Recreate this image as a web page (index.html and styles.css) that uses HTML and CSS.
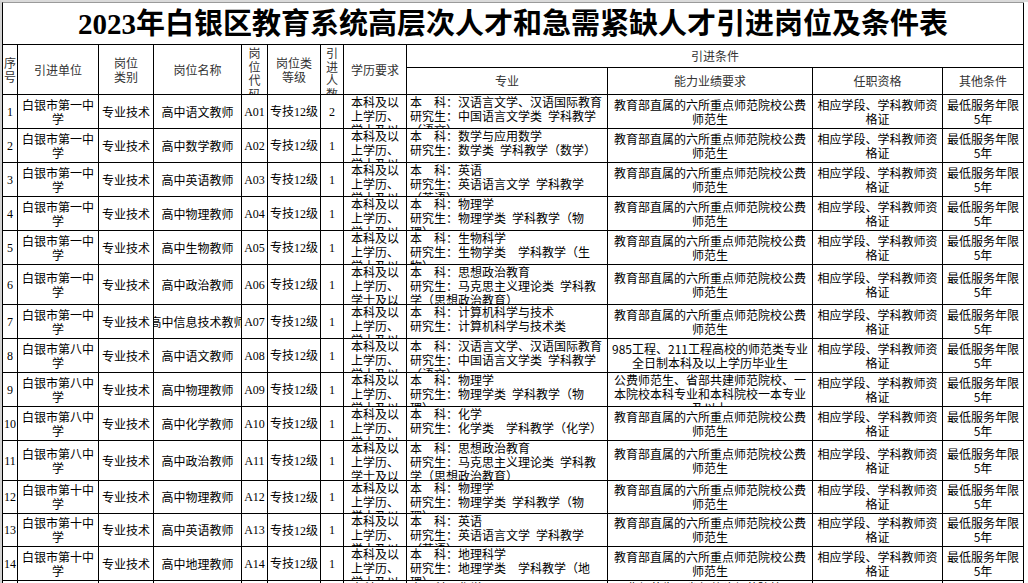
FILE: index.html
```html
<!DOCTYPE html>
<html lang="zh-CN">
<head>
<meta charset="utf-8">
<title>2023年白银区教育系统高层次人才和急需紧缺人才引进岗位及条件表</title>
<link rel="stylesheet" href="styles.css">
</head>
<body>
<div class="sheet">
  <div class="c title">2023年白银区教育系统高层次人才和急需紧缺人才引进岗位及条件表</div>

  <div class="c hd"><span>序<br>号</span></div>
  <div class="c hd"><span>引进单位</span></div>
  <div class="c hd"><span>岗位<br>类别</span></div>
  <div class="c hd"><span>岗位名称</span></div>
  <div class="c hd t vt"><span>岗<br>位<br>代<br>码</span></div>
  <div class="c hd"><span>岗位类<br>等级</span></div>
  <div class="c hd t vt"><span>引<br>进<br>人<br>数</span></div>
  <div class="c hd"><span>学历要求</span></div>
  <div class="c hs span4"><span>引进条件</span></div>
  <div class="c hs"><span>专业</span></div>
  <div class="c hs"><span>能力业绩要求</span></div>
  <div class="c hs"><span>任职资格</span></div>
  <div class="c hs"><span>其他条件</span></div>

  <!-- row 1 -->
  <div class="c sf"><span>1</span></div>
  <div class="c"><span>白银市第一中<br>学</span></div>
  <div class="c"><span>专业技术</span></div>
  <div class="c"><span>高中语文教师</span></div>
  <div class="c sf"><span>A01</span></div>
  <div class="c"><span>专技<b class="sf">12</b>级</span></div>
  <div class="c sf"><span>2</span></div>
  <div class="c t"><span>本科及以<br>上学历、<br>学士及以</span></div>
  <div class="c t l"><span>本　科：汉语言文学、汉语国际教育<br>研究生：中国语言文学类&ensp;学科教学<br>（语文）</span></div>
  <div class="c"><span>教育部直属的六所重点师范院校公费<br>师范生</span></div>
  <div class="c"><span>相应学段、学科教师资<br>格证</span></div>
  <div class="c"><span>最低服务年限<br>5年</span></div>

  <!-- row 2 -->
  <div class="c sf"><span>2</span></div>
  <div class="c"><span>白银市第一中<br>学</span></div>
  <div class="c"><span>专业技术</span></div>
  <div class="c"><span>高中数学教师</span></div>
  <div class="c sf"><span>A02</span></div>
  <div class="c"><span>专技<b class="sf">12</b>级</span></div>
  <div class="c sf"><span>1</span></div>
  <div class="c t"><span>本科及以<br>上学历、<br>学士及以</span></div>
  <div class="c t l"><span>本　科：数学与应用数学<br>研究生：数学类&ensp;学科教学（数学）</span></div>
  <div class="c"><span>教育部直属的六所重点师范院校公费<br>师范生</span></div>
  <div class="c"><span>相应学段、学科教师资<br>格证</span></div>
  <div class="c"><span>最低服务年限<br>5年</span></div>

  <!-- row 3 -->
  <div class="c sf"><span>3</span></div>
  <div class="c"><span>白银市第一中<br>学</span></div>
  <div class="c"><span>专业技术</span></div>
  <div class="c"><span>高中英语教师</span></div>
  <div class="c sf"><span>A03</span></div>
  <div class="c"><span>专技<b class="sf">12</b>级</span></div>
  <div class="c sf"><span>1</span></div>
  <div class="c t"><span>本科及以<br>上学历、<br>学士及以</span></div>
  <div class="c t l"><span>本　科：英语<br>研究生：英语语言文学&ensp;学科教学<br>（英语）</span></div>
  <div class="c"><span>教育部直属的六所重点师范院校公费<br>师范生</span></div>
  <div class="c"><span>相应学段、学科教师资<br>格证</span></div>
  <div class="c"><span>最低服务年限<br>5年</span></div>

  <!-- row 4 -->
  <div class="c sf"><span>4</span></div>
  <div class="c"><span>白银市第一中<br>学</span></div>
  <div class="c"><span>专业技术</span></div>
  <div class="c"><span>高中物理教师</span></div>
  <div class="c sf"><span>A04</span></div>
  <div class="c"><span>专技<b class="sf">12</b>级</span></div>
  <div class="c sf"><span>1</span></div>
  <div class="c t"><span>本科及以<br>上学历、<br>学士及以</span></div>
  <div class="c t l"><span>本　科：物理学<br>研究生：物理学类&ensp;学科教学（物<br>理）</span></div>
  <div class="c"><span>教育部直属的六所重点师范院校公费<br>师范生</span></div>
  <div class="c"><span>相应学段、学科教师资<br>格证</span></div>
  <div class="c"><span>最低服务年限<br>5年</span></div>

  <!-- row 5 -->
  <div class="c sf"><span>5</span></div>
  <div class="c"><span>白银市第一中<br>学</span></div>
  <div class="c"><span>专业技术</span></div>
  <div class="c"><span>高中生物教师</span></div>
  <div class="c sf"><span>A05</span></div>
  <div class="c"><span>专技<b class="sf">12</b>级</span></div>
  <div class="c sf"><span>1</span></div>
  <div class="c t"><span>本科及以<br>上学历、<br>学士及以</span></div>
  <div class="c t l"><span>本　科：生物科学<br>研究生：生物学类&ensp;&ensp;学科教学（生<br>物）</span></div>
  <div class="c"><span>教育部直属的六所重点师范院校公费<br>师范生</span></div>
  <div class="c"><span>相应学段、学科教师资<br>格证</span></div>
  <div class="c"><span>最低服务年限<br>5年</span></div>

  <!-- row 6 -->
  <div class="c sf"><span>6</span></div>
  <div class="c"><span>白银市第一中<br>学</span></div>
  <div class="c"><span>专业技术</span></div>
  <div class="c"><span>高中政治教师</span></div>
  <div class="c sf"><span>A06</span></div>
  <div class="c"><span>专技<b class="sf">12</b>级</span></div>
  <div class="c sf"><span>1</span></div>
  <div class="c t"><span>本科及以<br>上学历、<br>学士及以</span></div>
  <div class="c t l"><span>本　科：思想政治教育<br>研究生：马克思主义理论类&ensp;学科教<br>学（思想政治教育）</span></div>
  <div class="c"><span>教育部直属的六所重点师范院校公费<br>师范生</span></div>
  <div class="c"><span>相应学段、学科教师资<br>格证</span></div>
  <div class="c"><span>最低服务年限<br>5年</span></div>

  <!-- row 7 -->
  <div class="c sf"><span>7</span></div>
  <div class="c"><span>白银市第一中<br>学</span></div>
  <div class="c"><span>专业技术</span></div>
  <div class="c"><span>高中信息技术教师</span></div>
  <div class="c sf"><span>A07</span></div>
  <div class="c"><span>专技<b class="sf">12</b>级</span></div>
  <div class="c sf"><span>1</span></div>
  <div class="c t"><span>本科及以<br>上学历、<br>学士及以</span></div>
  <div class="c t l"><span>本　科：计算机科学与技术<br>研究生：计算机科学与技术类</span></div>
  <div class="c"><span>教育部直属的六所重点师范院校公费<br>师范生</span></div>
  <div class="c"><span>相应学段、学科教师资<br>格证</span></div>
  <div class="c"><span>最低服务年限<br>5年</span></div>

  <!-- row 8 -->
  <div class="c sf"><span>8</span></div>
  <div class="c"><span>白银市第八中<br>学</span></div>
  <div class="c"><span>专业技术</span></div>
  <div class="c"><span>高中语文教师</span></div>
  <div class="c sf"><span>A08</span></div>
  <div class="c"><span>专技<b class="sf">12</b>级</span></div>
  <div class="c sf"><span>1</span></div>
  <div class="c t"><span>本科及以<br>上学历、<br>学士及以</span></div>
  <div class="c t l"><span>本　科：汉语言文学、汉语国际教育<br>研究生：中国语言文学类&ensp;学科教学<br>（语文）</span></div>
  <div class="c"><span>985工程、211工程高校的师范类专业<br>全日制本科及以上学历毕业生</span></div>
  <div class="c"><span>相应学段、学科教师资<br>格证</span></div>
  <div class="c"><span>最低服务年限<br>5年</span></div>

  <!-- row 9 -->
  <div class="c sf"><span>9</span></div>
  <div class="c"><span>白银市第八中<br>学</span></div>
  <div class="c"><span>专业技术</span></div>
  <div class="c"><span>高中物理教师</span></div>
  <div class="c sf"><span>A09</span></div>
  <div class="c"><span>专技<b class="sf">12</b>级</span></div>
  <div class="c sf"><span>1</span></div>
  <div class="c t"><span>本科及以<br>上学历、<br>学士及以</span></div>
  <div class="c t l"><span>本　科：物理学<br>研究生：物理学类&ensp;学科教学（物<br>理）</span></div>
  <div class="c t"><span>公费师范生、省部共建师范院校、一<br>本院校本科专业和本科院校一本专业<br>及以上</span></div>
  <div class="c"><span>相应学段、学科教师资<br>格证</span></div>
  <div class="c"><span>最低服务年限<br>5年</span></div>

  <!-- row 10 -->
  <div class="c sf"><span>10</span></div>
  <div class="c"><span>白银市第八中<br>学</span></div>
  <div class="c"><span>专业技术</span></div>
  <div class="c"><span>高中化学教师</span></div>
  <div class="c sf"><span>A10</span></div>
  <div class="c"><span>专技<b class="sf">12</b>级</span></div>
  <div class="c sf"><span>1</span></div>
  <div class="c t"><span>本科及以<br>上学历、<br>学士及以</span></div>
  <div class="c t l"><span>本　科：化学<br>研究生：化学类&ensp;&ensp;学科教学（化学）</span></div>
  <div class="c"><span>教育部直属的六所重点师范院校公费<br>师范生</span></div>
  <div class="c"><span>相应学段、学科教师资<br>格证</span></div>
  <div class="c"><span>最低服务年限<br>5年</span></div>

  <!-- row 11 -->
  <div class="c sf"><span>11</span></div>
  <div class="c"><span>白银市第八中<br>学</span></div>
  <div class="c"><span>专业技术</span></div>
  <div class="c"><span>高中政治教师</span></div>
  <div class="c sf"><span>A11</span></div>
  <div class="c"><span>专技<b class="sf">12</b>级</span></div>
  <div class="c sf"><span>1</span></div>
  <div class="c t"><span>本科及以<br>上学历、<br>学士及以</span></div>
  <div class="c t l"><span>本　科：思想政治教育<br>研究生：马克思主义理论类&ensp;学科教<br>学（思想政治教育）</span></div>
  <div class="c"><span>教育部直属的六所重点师范院校公费<br>师范生</span></div>
  <div class="c"><span>相应学段、学科教师资<br>格证</span></div>
  <div class="c"><span>最低服务年限<br>5年</span></div>

  <!-- row 12 -->
  <div class="c sf"><span>12</span></div>
  <div class="c"><span>白银市第十中<br>学</span></div>
  <div class="c"><span>专业技术</span></div>
  <div class="c"><span>高中物理教师</span></div>
  <div class="c sf"><span>A12</span></div>
  <div class="c"><span>专技<b class="sf">12</b>级</span></div>
  <div class="c sf"><span>1</span></div>
  <div class="c t"><span>本科及以<br>上学历、<br>学士及以</span></div>
  <div class="c t l"><span>本　科：物理学<br>研究生：物理学类&ensp;学科教学（物<br>理）</span></div>
  <div class="c"><span>教育部直属的六所重点师范院校公费<br>师范生</span></div>
  <div class="c"><span>相应学段、学科教师资<br>格证</span></div>
  <div class="c"><span>最低服务年限<br>5年</span></div>

  <!-- row 13 -->
  <div class="c sf"><span>13</span></div>
  <div class="c"><span>白银市第十中<br>学</span></div>
  <div class="c"><span>专业技术</span></div>
  <div class="c"><span>高中英语教师</span></div>
  <div class="c sf"><span>A13</span></div>
  <div class="c"><span>专技<b class="sf">12</b>级</span></div>
  <div class="c sf"><span>1</span></div>
  <div class="c t"><span>本科及以<br>上学历、<br>学士及以</span></div>
  <div class="c t l"><span>本　科：英语<br>研究生：英语语言文学&ensp;学科教学<br>（英语）</span></div>
  <div class="c"><span>教育部直属的六所重点师范院校公费<br>师范生</span></div>
  <div class="c"><span>相应学段、学科教师资<br>格证</span></div>
  <div class="c"><span>最低服务年限<br>5年</span></div>

  <!-- row 14 -->
  <div class="c sf"><span>14</span></div>
  <div class="c"><span>白银市第十中<br>学</span></div>
  <div class="c"><span>专业技术</span></div>
  <div class="c"><span>高中地理教师</span></div>
  <div class="c sf"><span>A14</span></div>
  <div class="c"><span>专技<b class="sf">12</b>级</span></div>
  <div class="c sf"><span>1</span></div>
  <div class="c t"><span>本科及以<br>上学历、<br>学士及以</span></div>
  <div class="c t l"><span>本　科：地理科学<br>研究生：地理学类&ensp;&ensp;学科教学（地<br>理）</span></div>
  <div class="c"><span>教育部直属的六所重点师范院校公费<br>师范生</span></div>
  <div class="c"><span>相应学段、学科教师资<br>格证</span></div>
  <div class="c"><span>最低服务年限<br>5年</span></div>

  <!-- row 15 (cut off by the window) -->
  <div class="c sf"><span>15</span></div>
  <div class="c"><span>白银市第十中<br>学</span></div>
  <div class="c"><span>专业技术</span></div>
  <div class="c"><span>高中化学教师</span></div>
  <div class="c sf"><span>A15</span></div>
  <div class="c"><span>专技<b class="sf">12</b>级</span></div>
  <div class="c sf"><span>1</span></div>
  <div class="c t"><span>本科及以<br>上学历、<br>学士及以</span></div>
  <div class="c t l"><span>本　科：化学<br>研究生：化学类&ensp;&ensp;学科教学（化学）</span></div>
  <div class="c t"><span>公费师范生、省部共建师范院校、一<br>本院校本科专业和本科院校一本专业</span></div>
  <div class="c"><span>相应学段、学科教师资<br>格证</span></div>
  <div class="c"><span>最低服务年限<br>5年</span></div>
</div>
</body>
</html>
```

FILE: styles.css
```css
* {
  box-sizing: border-box;
  margin: 0;
  padding: 0;
}

html,
body {
  width: 1028px;
  height: 583px;
  overflow: hidden;
  background: #ffffff;
}

body {
  font-family: "Noto Sans CJK SC", "Noto Sans", sans-serif;
  font-size: 12px;
  line-height: 14px;
  color: #000000;
  border-top: 2px solid #dadada;
  border-left: 2px solid #d2d2d2;
}

.sheet {
  display: grid;
  width: 1022px;
  grid-template-columns: 15px 81px 55px 88px 26px 53px 23px 63px 201px 205px 130px 81px;
  grid-template-rows: 42px 23px 27px repeat(5, 34px) 40px repeat(4, 34px) 40px 33px 33px 34px 34px;
  border-left: 1px solid #000000;
  border-top: 1px solid #9a9a9a;
}

.c {
  display: flex;
  align-items: center;
  justify-content: center;
  text-align: center;
  white-space: nowrap;
  overflow: hidden;
  border-right: 1px solid #000000;
  border-bottom: 1px solid #000000;
}

.c b {
  font-weight: 400;
}

.t {
  align-items: flex-start;
}

.l {
  justify-content: flex-start;
  text-align: left;
  padding-left: 3px;
}

.sf {
  font-family: "Liberation Serif", "Noto Sans CJK SC", serif;
}

.title {
  grid-column: 1 / -1;
  font-family: "Liberation Serif", "Noto Sans CJK SC", serif;
  font-weight: 700;
  font-size: 29px;
  line-height: 34px;
  color: #000000;
}

.hd {
  grid-row: span 2;
  color: #333333;
}

.hs {
  color: #333333;
}

.vt {
  line-height: 13.5px;
  padding-top: 1px;
}

.span4 {
  grid-column: span 4;
}
```
